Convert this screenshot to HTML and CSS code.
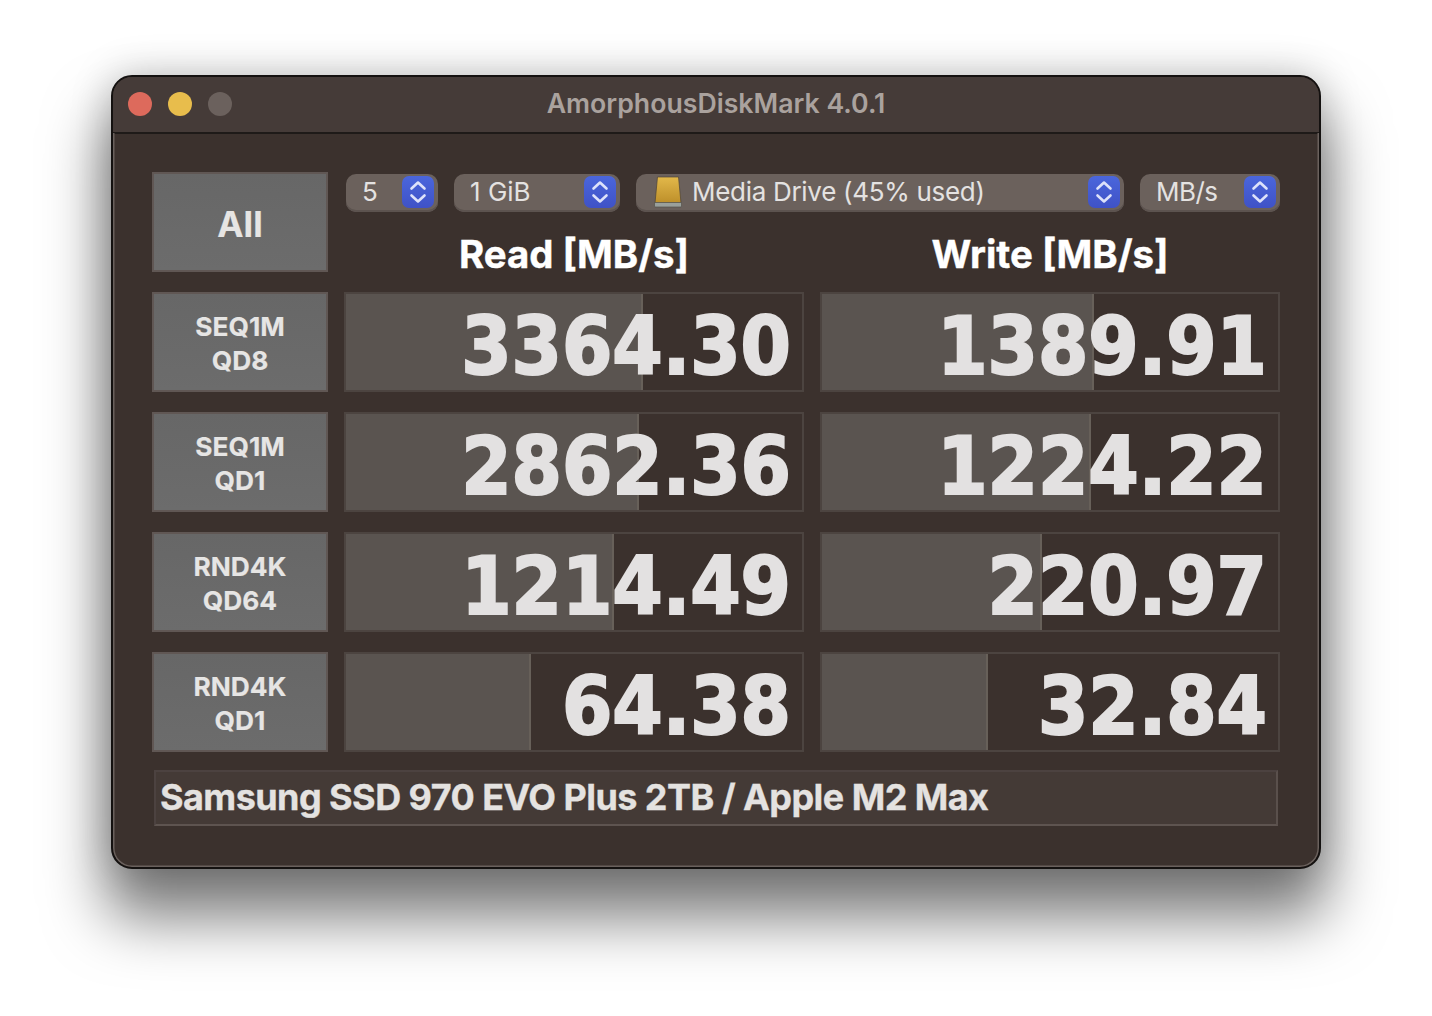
FILE: index.html
```html
<!DOCTYPE html>
<html lang="en">
<head>
<meta charset="utf-8">
<title>AmorphousDiskMark 4.0.1</title>
<link rel="stylesheet" href="styles.css">
</head>
<body>
<main class="window">
  <header class="titlebar">
    <div class="lights">
      <span class="light red"></span>
      <span class="light yellow"></span>
      <span class="light gray"></span>
    </div>
    <h1 class="title">AmorphousDiskMark 4.0.1</h1>
  </header>
  <div class="content">
    <div class="grid">
      <button class="test all">All</button>
      <div class="top">
        <div class="selects">
          <div class="select s-count"><span>5</span><svg class="stepper" viewBox="0 0 32 32"><defs><linearGradient id="sg" x1="0" y1="0" x2="0" y2="1"><stop offset="0" stop-color="#4a66dc"/><stop offset="1" stop-color="#3f52c6"/></linearGradient></defs><rect width="32" height="32" rx="7" class="st-bg"/><path d="M9.500 12.500 16 6.500l6.500 6M9.500 19.500l6.500 6 6.500-6" class="st-ch"/></svg></div>
          <div class="select s-size"><span>1 GiB</span><svg class="stepper" viewBox="0 0 32 32"><rect width="32" height="32" rx="7" class="st-bg"/><path d="M9.500 12.500 16 6.500l6.500 6M9.500 19.500l6.500 6 6.500-6" class="st-ch"/></svg></div>
          <div class="select s-drive">
            <svg class="drive" viewBox="0 0 30 32"><defs><linearGradient id="dg" x1="0" y1="0" x2="0" y2="1"><stop offset="0" stop-color="#e2b84a"/><stop offset="1" stop-color="#bd8f2a"/></linearGradient></defs><path d="M4.500 1h21l2.500 26H2z" fill="url(#dg)" stroke="#4d4436" stroke-width=".7"/><path d="M1.500 26.500h27v3.500a1 1 0 0 1-1 1h-25a1 1 0 0 1-1-1z" fill="#9aa09c" stroke="#55524c" stroke-width=".7"/></svg>
            <span>Media Drive (45% used)</span>
            <svg class="stepper" viewBox="0 0 32 32"><rect width="32" height="32" rx="7" class="st-bg"/><path d="M9.500 12.500 16 6.500l6.500 6M9.500 19.500l6.500 6 6.500-6" class="st-ch"/></svg>
          </div>
          <div class="select s-unit"><span>MB/s</span><svg class="stepper" viewBox="0 0 32 32"><rect width="32" height="32" rx="7" class="st-bg"/><path d="M9.500 12.500 16 6.500l6.500 6M9.500 19.500l6.500 6 6.500-6" class="st-ch"/></svg></div>
        </div>
        <div class="heads">
          <div class="head">Read [MB/s]</div>
          <div class="head">Write [MB/s]</div>
        </div>
      </div>

      <button class="test">SEQ1M<br>QD8</button>
      <div class="cell"><div class="bar" style="width:297px"></div><span class="val">3364.30</span></div>
      <div class="cell"><div class="bar" style="width:272px"></div><span class="val">1389.91</span></div>

      <button class="test">SEQ1M<br>QD1</button>
      <div class="cell"><div class="bar" style="width:293px"></div><span class="val">2862.36</span></div>
      <div class="cell"><div class="bar" style="width:269px"></div><span class="val">1224.22</span></div>

      <button class="test">RND4K<br>QD64</button>
      <div class="cell"><div class="bar" style="width:268px"></div><span class="val">1214.49</span></div>
      <div class="cell"><div class="bar" style="width:220px"></div><span class="val">220.97</span></div>

      <button class="test">RND4K<br>QD1</button>
      <div class="cell"><div class="bar" style="width:185px"></div><span class="val">64.38</span></div>
      <div class="cell"><div class="bar" style="width:166px"></div><span class="val">32.84</span></div>
    </div>
    <div class="comment">Samsung SSD 970 EVO Plus 2TB / Apple M2 Max</div>
  </div>
</main>
</body>
</html>
```
FILE: styles.css
```css
* { box-sizing: border-box; }
html, body { margin: 0; height: 100%; }
body {
  background: #fff;
  padding: 75px 111px 0;
  font-family: Inter, "Liberation Sans", sans-serif;
  color: #e4e2e1;
  overflow: hidden;
}
.window {
  width: 1210px;
  height: 794px;
  background: #3b312d;
  border-radius: 21px;
  border: 2px solid #141110;
  box-shadow: 0 44px 60px 6px rgba(0,0,0,.5), 0 0 40px rgba(0,0,0,.22);
  overflow: hidden;
  display: flex;
  flex-direction: column;
  position: relative;
}
.window::after {
  content: "";
  position: absolute;
  inset: 0;
  border-radius: 19px;
  box-shadow: inset 0 0 0 1.5px #6a615d;
  pointer-events: none;
  clip-path: inset(56px 0 0 0);
}
.titlebar {
  height: 57px;
  flex: none;
  background: #453b38;
  border-bottom: 2px solid #1e1a18;
  display: flex;
  align-items: center;
  position: relative;
  padding-left: 15px;
  padding-bottom: 2px;
}
.lights { display: flex; gap: 16px; }
.light { width: 24px; height: 24px; border-radius: 50%; }
.red { background: #dd6a5c; }
.yellow { background: #e8bd4c; }
.gray { background: #6b615d; }
.title {
  position: absolute;
  left: 0; right: 0; top: 11px;
  margin: 0;
  text-align: center;
  font-size: 26.7px;
  line-height: 30px;
  font-weight: 600;
  color: #aaa29e;
}
.content { padding: 38px 39px 0; }
.grid {
  display: grid;
  grid-template-columns: 176px 460px 460px;
  grid-auto-rows: 100px;
  column-gap: 16px;
  row-gap: 20px;
}
.test {
  display: block;
  margin: 0;
  padding: 4px 0 0;
  border: 2px solid #605754;
  background: linear-gradient(#676767, #6c6c6c);
  color: #e6e5e4;
  font-family: Inter, "Liberation Sans", sans-serif;
  font-weight: 700;
  font-size: 26.3px;
  line-height: 34px;
  text-align: center;
  -webkit-text-stroke: .15px #e6e5e4;
}
.test.all { font-size: 35.2px; padding-top: 4px; }
.top { grid-column: 2 / 4; display: flex; flex-direction: column; }
.selects { display: flex; gap: 16px; padding: 2px 0 0 2px; height: 40px; }
.select {
  height: 38px;
  border-radius: 10px;
  background: #6b615c;
  box-shadow: inset 0 -2px 0 #5c534f;
  display: flex;
  align-items: center;
  justify-content: space-between;
  padding: 0 4px 3px 16px;
  font-size: 26px;
  letter-spacing: -.3px;
  color: #e4e2e1;
}
.select .stepper { margin-top: 1px; }
.s-count { width: 92px; }
.s-size { width: 166px; letter-spacing: 0; }
.s-drive { width: 488px; padding-left: 17px; }
.s-drive span { flex: 1; padding-left: 9px; }
.s-unit { width: 140px; letter-spacing: -.5px; }
.stepper { width: 32px; height: 32px; flex: none; }
.st-bg { fill: url(#sg); }
.st-ch { fill: none; stroke: #dde2fa; stroke-width: 2.6; stroke-linecap: round; stroke-linejoin: round; }
.drive { width: 30px; height: 32px; flex: none; margin-top: 1px; }
.heads { display: grid; grid-template-columns: 460px 460px; column-gap: 16px; }
.head {
  text-align: center;
  font-weight: 700;
  font-size: 38.4px;
  line-height: 46px;
  margin-top: 19px;
  color: #fff;
  -webkit-text-stroke: .4px #fff;
}
.cell {
  position: relative;
  border: 2px solid #4c4440;
  display: flex;
  align-items: center;
  justify-content: flex-end;
  padding: 8px 11px 0 0;
}
.bar {
  position: absolute;
  left: 0; top: 0; bottom: 0;
  background: #5a5450;
  border-right: 2px solid #676059;
}
.val {
  position: relative;
  font-family: "DejaVu Sans", sans-serif;
  font-stretch: condensed;
  font-weight: 700;
  font-size: 80.5px;
  line-height: 90px;
  color: #e3e1e1;
  -webkit-text-stroke: 2px #e3e1e1;
}
.comment {
  margin: 18px 2px 0;
  height: 56px;
  width: 1124px;
  border: 2px solid #4c4240;
  border-bottom-color: #5e5450;
  border-right-color: #5a504c;
  background: #443a36;
  font-weight: 700;
  font-size: 36px;
  letter-spacing: -.56px;
  line-height: 50px;
  padding-left: 4px;
  color: #e4e2e0;
  -webkit-text-stroke: .3px #e4e2e0;
}
```
